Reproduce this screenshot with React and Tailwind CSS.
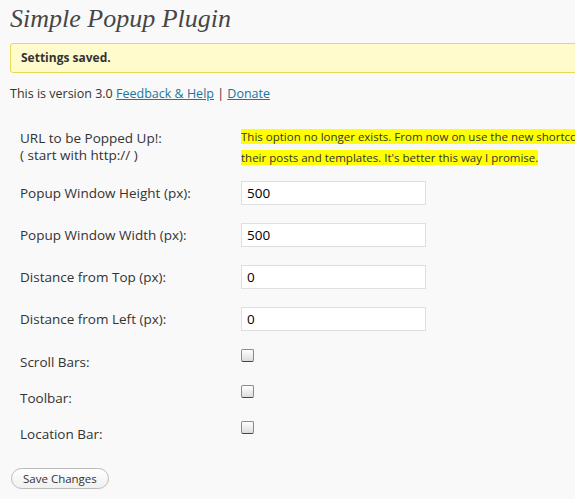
const sans = { fontFamily: '"Open Sans", "DejaVu Sans", sans-serif' }

function Row({ label, children, className = '' }) {
  return (
    <div className={`flex ${className}`}>
      <div className="w-[231px] shrink-0 pl-[10px] text-[13.5px] text-[#333]">{label}</div>
      <div>{children}</div>
    </div>
  )
}

function TextField({ value }) {
  return (
    <input
      type="text"
      defaultValue={value}
      className="block h-[24px] w-[185px] border border-[#dfdfdf] bg-white px-[5px] text-[13.5px] text-black outline-none"
    />
  )
}

function Check() {
  return (
    <span className="block h-[13px] w-[13px] rounded-[2px] border border-[#8a8a8a] border-b-[#444] bg-gradient-to-b from-white to-[#dcdcdc]" />
  )
}

export default function App() {
  return (
    <div className="h-[499px] w-[575px] overflow-hidden bg-[#f9f9f9] pl-[10px] text-[#333]" style={sans}>
      <h2
        className="pt-[3px] text-[26px] leading-[31px] italic text-[#464646]"
        style={{ fontFamily: '"Liberation Serif", "DejaVu Serif", serif' }}
      >
        Simple Popup Plugin
      </h2>

      <div className="mt-[9px] flex h-[30px] w-[600px] items-center rounded-[3px] border border-[#e6db55] bg-[#fffbcc] pl-[10px] text-[12px] font-bold text-[#333]">
        Settings saved.
      </div>

      <p className="mt-[12px] text-[12.5px] leading-[17px]">
        This is version 3.0{' '}
        <a href="#" className="text-[#21759b] underline">Feedback &amp; Help</a> |{' '}
        <a href="#" className="text-[#21759b] underline">Donate</a>
      </p>

      <div className="mt-[19px]">
        <Row
          label={
            <div className="leading-[17px]">
              URL to be Popped Up!:
              <br />( start with http:// )
            </div>
          }
          className="h-[52px] items-center"
        >
          <div className="w-[334px] overflow-hidden whitespace-nowrap text-[11.5px] leading-[21px] text-[#333]">
            <span className="bg-[#ffff00]">This option no longer exists. From now on use the new shortcode</span>
            <br />
            <span className="bg-[#ffff00]">their posts and templates. It's better this way I promise.</span>
          </div>
        </Row>

        <div className="mt-[8px] flex flex-col gap-[18px]">
          <Row label="Popup Window Height (px):" className="items-center">
            <TextField value="500" />
          </Row>
          <Row label="Popup Window Width (px):" className="items-center">
            <TextField value="500" />
          </Row>
          <Row label="Distance from Top (px):" className="items-center">
            <TextField value="0" />
          </Row>
          <Row label="Distance from Left (px):" className="items-center">
            <TextField value="0" />
          </Row>
        </div>

        <div className="mt-[18px] flex flex-col gap-[16px]">
          <Row label={<div className="pt-[3px] leading-[20px]">Scroll Bars:</div>} className="h-[20px]">
            <Check />
          </Row>
          <Row label={<div className="pt-[3px] leading-[20px]">Toolbar:</div>} className="h-[20px]">
            <Check />
          </Row>
          <Row label={<div className="pt-[3px] leading-[20px]">Location Bar:</div>} className="h-[20px]">
            <Check />
          </Row>
        </div>
      </div>

      <button
        type="button"
        className="mt-[27px] ml-[1px] block h-[21px] rounded-full border border-[#bbb] bg-gradient-to-b from-white to-[#f0f0f0] px-[11px] text-[11.5px] text-[#333]"
      >
        Save Changes
      </button>
    </div>
  )
}
